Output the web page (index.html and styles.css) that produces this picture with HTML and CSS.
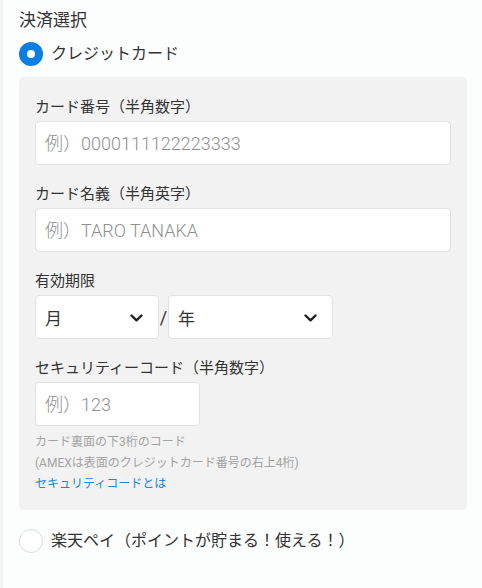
FILE: index.html
```html
<!DOCTYPE html>
<html lang="ja">
<head>
<meta charset="utf-8">
<title>決済選択</title>
<link rel="stylesheet" href="styles.css">
</head>
<body>
<div class="page">
  <div class="content">
    <h2 class="title">決済選択</h2>
    <label class="radio-row">
      <span class="radio radio--checked"></span>
      <span class="radio-text">クレジットカード</span>
    </label>
    <div class="panel">
      <div class="field">
        <div class="label">カード番号（半角数字）</div>
        <input class="input input--full" type="text" placeholder="例）0000111122223333">
      </div>
      <div class="field">
        <div class="label">カード名義（半角英字）</div>
        <input class="input input--full" type="text" placeholder="例）TARO TANAKA">
      </div>
      <div class="field">
        <div class="label">有効期限</div>
        <div class="expiry">
          <div class="select select--month">
            <span class="select-value">月</span>
            <svg class="chevron" width="13" height="8" viewBox="0 0 13 8"><path d="M1.5 1.5 L6.5 6.3 L11.5 1.5" fill="none" stroke="#1f1f1f" stroke-width="2.4" stroke-linecap="round" stroke-linejoin="round"/></svg>
          </div>
          <span class="slash">/</span>
          <div class="select select--year">
            <span class="select-value">年</span>
            <svg class="chevron" width="13" height="8" viewBox="0 0 13 8"><path d="M1.5 1.5 L6.5 6.3 L11.5 1.5" fill="none" stroke="#1f1f1f" stroke-width="2.4" stroke-linecap="round" stroke-linejoin="round"/></svg>
          </div>
        </div>
      </div>
      <div class="field">
        <div class="label">セキュリティーコード（半角数字）</div>
        <input class="input input--cvc" type="text" placeholder="例）123">
      </div>
      <div class="help">
        <p class="help-text">カード裏面の下3桁のコード</p>
        <p class="help-text">(AMEXは表面のクレジットカード番号の右上4桁)</p>
        <a class="help-link" href="#">セキュリティコードとは</a>
      </div>
    </div>
    <label class="radio-row radio-row--second">
      <span class="radio"></span>
      <span class="radio-text">楽天ペイ（ポイントが貯まる！使える！）</span>
    </label>
  </div>
</div>
</body>
</html>
```
FILE: styles.css
```css
* { box-sizing: border-box; }
html, body { margin: 0; padding: 0; }
body {
  background: #fcfdfd;
  font-family: Roboto, "Noto Sans CJK JP", sans-serif;
  color: #333;
}
.page {
  min-height: 588px;
  border-left: 3px solid #f2f3f5;
  padding: 8px 15px 0 16px;
}
.title {
  margin: 0;
  font-size: 17px;
  font-weight: 400;
  line-height: 24px;
  color: #333;
}
.radio-row {
  display: flex;
  align-items: center;
  gap: 8px;
  margin-top: 10px;
  height: 24px;
}
.radio-row--second { margin-top: 19px; }
.radio {
  width: 24px;
  height: 24px;
  border-radius: 50%;
  border: 1px solid #dcdcdc;
  background: #fff;
  flex: none;
}
.radio--checked {
  border: 8px solid #0a7fe2;
  background: #fff;
}
.radio-text {
  font-size: 16px;
  line-height: 24px;
  color: #333;
}
.panel {
  margin-top: 11px;
  background: #f2f2f2;
  border-radius: 5px;
  padding: 18px 16px 15px;
}
.field + .field { margin-top: 17px; }
.label {
  font-size: 15px;
  line-height: 24px;
  margin-bottom: 2px;
  color: #333;
}
.input {
  display: block;
  height: 44px;
  border: 1px solid #e2e2e2;
  border-radius: 4px;
  background: #fff;
  padding: 0 9px;
  font-family: Roboto, "Noto Sans CJK JP", sans-serif;
  font-size: 18px;
  font-weight: 300;
  color: #333;
  outline: none;
}
.input::placeholder { color: #8f8f8f; }
.input--full { width: 100%; }
.input--cvc { width: 165px; }
.expiry {
  display: flex;
  align-items: center;
}
.select {
  position: relative;
  height: 44px;
  border: 1px solid #e2e2e2;
  border-radius: 4px;
  background: #fff;
  display: flex;
  align-items: center;
  padding-left: 9px;
}
.select--month { width: 124px; }
.select--year { width: 165px; }
.select-value {
  font-size: 17px;
  color: #333;
}
.chevron {
  position: absolute;
  right: 15px;
  top: 18px;
}
.slash {
  width: 9px;
  text-align: center;
  font-size: 18px;
  color: #333;
}
.help { margin-top: 6px; }
.help-text {
  margin: 0;
  font-size: 12px;
  line-height: 21px;
  color: #a3a3a3;
}
.help-link {
  display: block;
  font-size: 12px;
  line-height: 21px;
  color: #1a86e2;
  text-decoration: none;
}
```
